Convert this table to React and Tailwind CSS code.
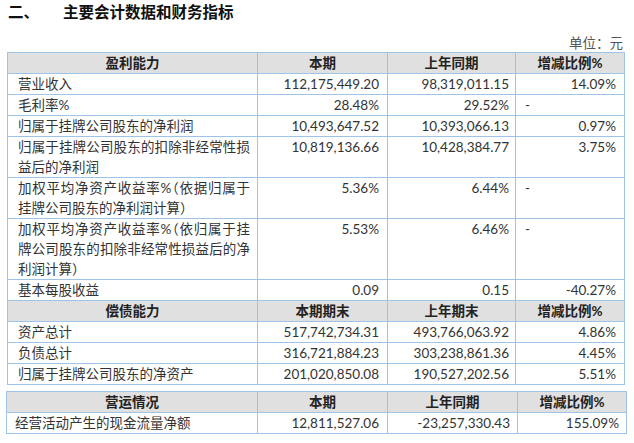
import React from "react";

const cjk = "font-['Lato','Noto_Sans_CJK_SC',sans-serif]";
const num = "font-['Lato',sans-serif] text-[13.5px]";

const profit = [
  ["营业收入", "112,175,449.20", "98,319,011.15", "14.09%"],
  ["毛利率%", "28.48%", "29.52%", "-"],
  ["归属于挂牌公司股东的净利润", "10,493,647.52", "10,393,066.13", "0.97%"],
  [["归属于挂牌公司股东的扣除非经常性损", "益后的净利润"], "10,819,136.66", "10,428,384.77", "3.75%"],
  [["加权平均净资产收益率%（依据归属于", "挂牌公司股东的净利润计算）"], "5.36%", "6.44%", "-"],
  [
    ["加权平均净资产收益率%（依归属于挂", "牌公司股东的扣除非经常性损益后的净", "利润计算）"],
    "5.53%",
    "6.46%",
    "-",
  ],
  ["基本每股收益", "0.09", "0.15", "-40.27%"],
];

const debt = [
  ["资产总计", "517,742,734.31", "493,766,063.92", "4.86%"],
  ["负债总计", "316,721,884.23", "303,238,861.36", "4.45%"],
  ["归属于挂牌公司股东的净资产", "201,020,850.08", "190,527,202.56", "5.51%"],
];

const td = "border border-[#9dc3e6] p-0 align-top leading-5";

const HeadRow = ({ cells }) => (
  <tr className="bg-[#e0e0e0]">
    {cells.map((c, i) => (
      <td key={i} className={`${td} text-center font-bold text-[13.5px] text-[#222] ${cjk}`}>
        {c}
      </td>
    ))}
  </tr>
);

const Label = ({ text }) => {
  if (!Array.isArray(text)) return <span className="whitespace-nowrap">{text}</span>;
  return text.map((line, i) => (
    <div
      key={i}
      className={
        i < text.length - 1
          ? "whitespace-nowrap text-justify [text-align-last:justify]"
          : "whitespace-nowrap"
      }
    >
      {line}
    </div>
  ));
};

const DataRow = ({ row, padL = "pl-[10px] pr-[7px]", pads = ["pr-[8px]", "pr-[6px]", "pr-[8px]"] }) => (
  <tr>
    <td className={`${td} ${padL} text-[13.5px] text-[#333] ${cjk} [font-feature-settings:'halt']`}>
      <Label text={row[0]} />
    </td>
    {row.slice(1).map((v, i) =>
      v === "-" ? (
        <td key={i} className={`${td} pl-[9px] text-left ${num} text-[#333]`}>
          -
        </td>
      ) : (
        <td key={i} className={`${td} ${pads[i]} text-right ${num} text-[#333]`}>
          {v}
        </td>
      )
    )}
  </tr>
);

export default function App() {
  return (
    <div className="w-[634px] h-[443px] bg-white overflow-hidden">
      <div className={`h-[24px] leading-[24px] flex pl-[8px] text-[15.5px] font-bold text-[#111] ${cjk}`}>
        <span className="w-[55px]">二、</span>
        <span>主要会计数据和财务指标</span>
      </div>
      <div className={`mt-[10px] h-[18px] leading-[18px] text-right pr-[11px] text-[13.5px] text-[#555] ${cjk}`}>
        单位：元
      </div>
      <table className="ml-[7px] w-[617px] table-fixed border-collapse">
        <colgroup>
          <col className="w-[250px]" />
          <col className="w-[130px]" />
          <col className="w-[128px]" />
          <col className="w-[109px]" />
        </colgroup>
        <tbody>
          <HeadRow cells={["盈利能力", "本期", "上年同期", "增减比例%"]} />
          {profit.map((r, i) => (
            <DataRow key={i} row={r} />
          ))}
          <HeadRow cells={["偿债能力", "本期期末", "上年期末", "增减比例%"]} />
          {debt.map((r, i) => (
            <DataRow key={i} row={r} />
          ))}
        </tbody>
      </table>
      <table className="mt-[6px] ml-[6px] w-[620px] table-fixed border-collapse">
        <colgroup>
          <col className="w-[251px]" />
          <col className="w-[130px]" />
          <col className="w-[130px]" />
          <col className="w-[109px]" />
        </colgroup>
        <tbody>
          <HeadRow cells={["营运情况", "本期", "上年同期", "增减比例%"]} />
          <DataRow
            row={["经营活动产生的现金流量净额", "12,811,527.06", "-23,257,330.43", "155.09%"]}
            padL="pl-[8px] pr-[7px]"
            pads={["pr-[8px]", "pr-[7px]", "pr-[7px]"]}
          />
        </tbody>
      </table>
    </div>
  );
}
